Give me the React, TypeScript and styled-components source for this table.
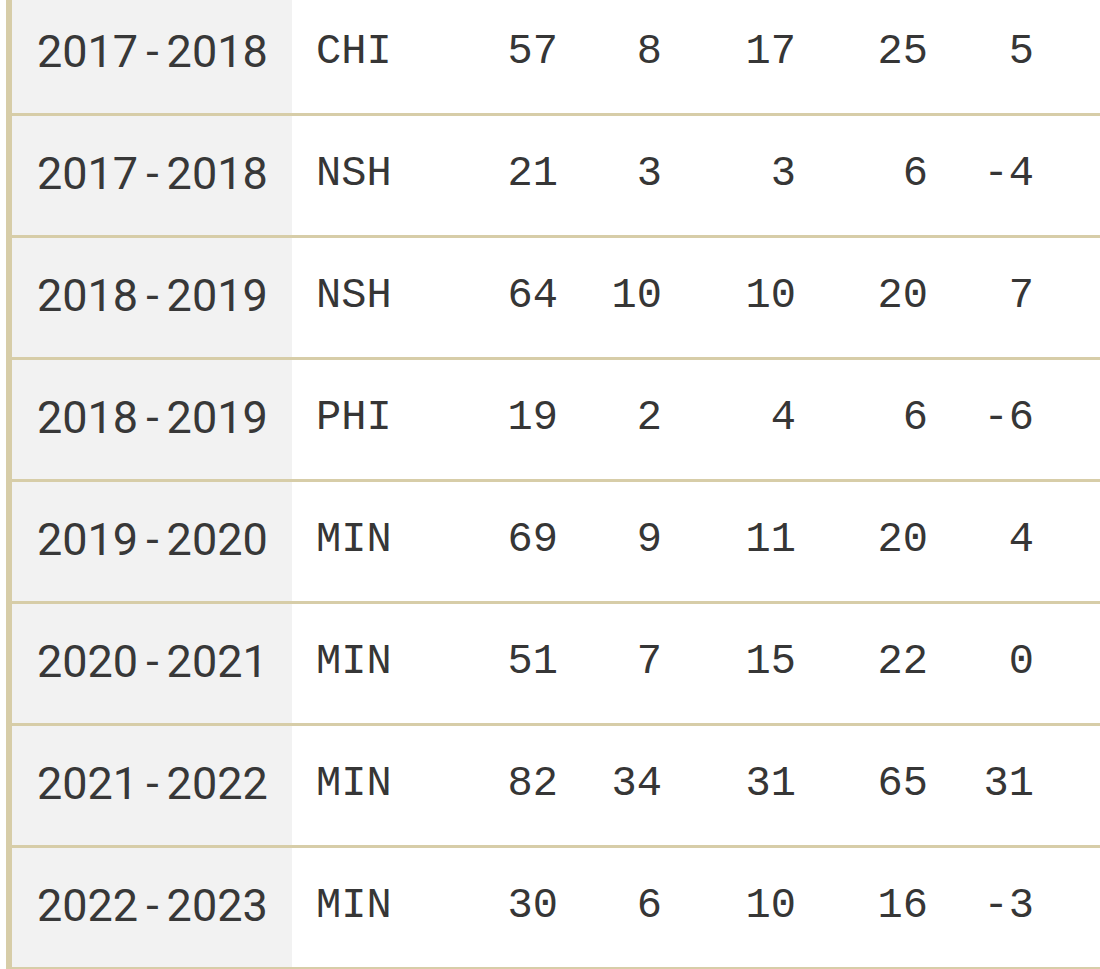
import React from "react";
import styled, { createGlobalStyle } from "styled-components";

const GlobalStyle = createGlobalStyle`
  html, body {
    margin: 0;
    padding: 0;
    background: #ffffff;
    overflow: hidden;
  }
`;

const Page = styled.div`
  width: 1100px;
  height: 969px;
  overflow: hidden;
  padding-left: 6px;
  box-sizing: border-box;
`;

const Table = styled.div`
  margin-top: -6px;
  border-left: 6px solid #d7cda8;
  display: grid;
  grid-template-columns: 280px 158px 130px 104px 134px 132px 106px 1fr;
  grid-auto-rows: 122px;
`;

const Row = styled.div`
  display: contents;
`;

const Cell = styled.div<{ $align?: "left" | "right"; $shaded?: boolean }>`
  display: flex;
  align-items: center;
  justify-content: ${(p) => (p.$align === "right" ? "flex-end" : "flex-start")};
  padding: 0 ${(p) => (p.$align === "right" ? "22px" : "0")} 4px
    ${(p) => (p.$align === "right" ? "0" : "24px")};
  background: ${(p) => (p.$shaded ? "#f2f2f2" : "#ffffff")};
  border-bottom: 3px solid #d7cda8;
  box-sizing: border-box;
  height: 100%;
  color: #363636;
  font-family: "Liberation Mono", "DejaVu Sans Mono", monospace;
  font-size: 42px;
  white-space: nowrap;
`;

const Season = styled(Cell)`
  font-family: Roboto, "Liberation Sans", sans-serif;
  font-size: 45px;
  padding-left: 25px;
  color: #383838;
`;

const Dash = styled.span`
  margin: 0 8px 0 8px;
`;

const Team = styled(Cell)`
  padding-left: 24px;
`;

type Line = {
  start: string;
  end: string;
  team: string;
  gp: number;
  g: number;
  a: number;
  p: number;
  pm: number;
};

const rows: Line[] = [
  { start: "2017", end: "2018", team: "CHI", gp: 57, g: 8, a: 17, p: 25, pm: 5 },
  { start: "2017", end: "2018", team: "NSH", gp: 21, g: 3, a: 3, p: 6, pm: -4 },
  { start: "2018", end: "2019", team: "NSH", gp: 64, g: 10, a: 10, p: 20, pm: 7 },
  { start: "2018", end: "2019", team: "PHI", gp: 19, g: 2, a: 4, p: 6, pm: -6 },
  { start: "2019", end: "2020", team: "MIN", gp: 69, g: 9, a: 11, p: 20, pm: 4 },
  { start: "2020", end: "2021", team: "MIN", gp: 51, g: 7, a: 15, p: 22, pm: 0 },
  { start: "2021", end: "2022", team: "MIN", gp: 82, g: 34, a: 31, p: 65, pm: 31 },
  { start: "2022", end: "2023", team: "MIN", gp: 30, g: 6, a: 10, p: 16, pm: -3 },
];

export default function App() {
  return (
    <>
      <GlobalStyle />
      <Page>
        <Table>
          {rows.map((r, i) => (
            <Row key={i}>
              <Season $shaded>
                {r.start}
                <Dash>-</Dash>
                {r.end}
              </Season>
              <Team>{r.team}</Team>
              <Cell $align="right">{r.gp}</Cell>
              <Cell $align="right">{r.g}</Cell>
              <Cell $align="right">{r.a}</Cell>
              <Cell $align="right">{r.p}</Cell>
              <Cell $align="right">{r.pm}</Cell>
              <Cell />
            </Row>
          ))}
        </Table>
      </Page>
    </>
  );
}
